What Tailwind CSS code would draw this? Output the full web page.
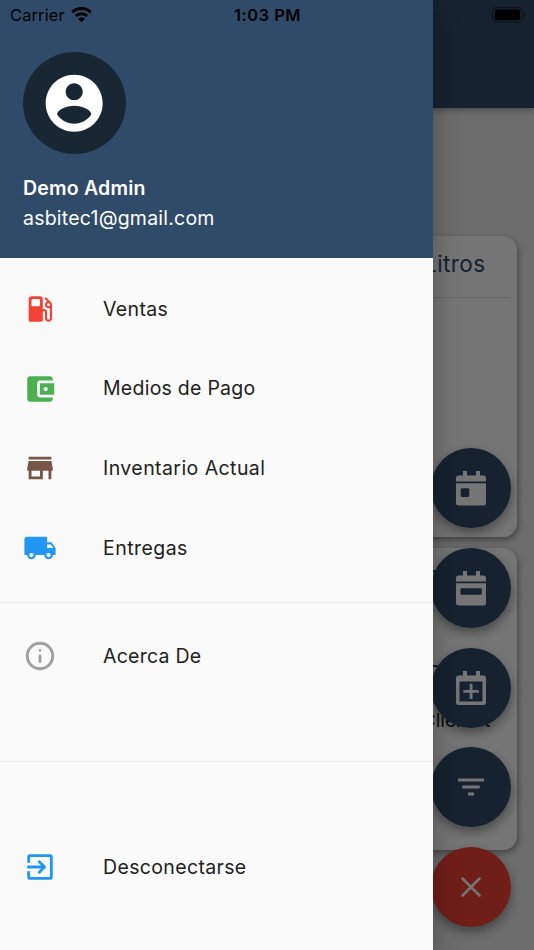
<!DOCTYPE html>
<html lang="es">
<head>
<meta charset="utf-8">
<title>Menú</title>
<script src="https://cdn.jsdelivr.net/npm/@tailwindcss/browser@4"></script>
</head>
<body class="relative h-[950px] w-[534px] overflow-hidden bg-[#eeeeee] font-['Inter','Liberation_Sans',sans-serif]">

<!-- Dashboard behind the drawer -->
<main class="flex h-full flex-col">
  <header class="relative h-[108px] shrink-0 bg-[#304b69] shadow-[0_3px_6px_rgba(0,0,0,0.3)]"></header>
  <div class="mt-[127.500px] flex flex-col gap-[10.500px] pr-[17.500px] pl-[17px]">
    <section class="h-[301.500px] rounded-[14px] bg-white shadow-[1px_3px_7px_rgba(0,0,0,0.4)]">
      <h2 class="h-[62px] mx-[6px] border-b border-[#e4e4e4] pr-[25px] pt-[11px] text-right text-[22.5px] leading-[34px] tracking-[0.4px] text-[#304b69]">Litros</h2>
    </section>
    <section class="h-[302px] rounded-[14px] bg-white shadow-[1px_3px_7px_rgba(0,0,0,0.4)]">
      <div class="mx-[6px] flex h-[63px] justify-end border-b border-[#e4e4e4] pr-[74px] pt-[9px] text-[22px] leading-[34px] text-[#304b69]">r</div>
      <div class="flex justify-end pr-[75px] pt-[49px] text-[19px] leading-[26px] text-[#212121]">C</div>
      <div class="flex justify-end pr-[26px] pt-[22px] text-[19px] leading-[26px] text-[#212121]">Client. t</div>
    </section>
  </div>
</main>

<!-- Floating action buttons -->
<div class="absolute top-[448.300px] left-[431px] flex flex-col gap-[19.7px]">
  <button class="flex size-[80px] items-center justify-center rounded-full bg-[#304b69] shadow-[0_5px_11px_rgba(0,0,0,0.4)]">
    <svg class="h-[36px] w-[32px]" viewBox="0 0 32 36" fill="white"><path fill-rule="evenodd" d="M1 11.500V8a2.500 2.500 0 0 1 2.500-2.500H8V1h4v4.500h9V1h4v4.500h3.500A2.500 2.500 0 0 1 31 8v3.500ZM1 13.200H31V33a2.500 2.500 0 0 1-2.500 2.500h-25A2.500 2.500 0 0 1 1 33ZM7 18.300a1.300 1.300 0 0 0-1.300 1.300v6a1.300 1.300 0 0 0 1.300 1.300h6a1.300 1.300 0 0 0 1.300-1.300v-6a1.300 1.300 0 0 0-1.300-1.300Z"/></svg>
  </button>
  <button class="flex size-[80px] items-center justify-center rounded-full bg-[#304b69] shadow-[0_5px_11px_rgba(0,0,0,0.4)]">
    <svg class="h-[36px] w-[32px]" viewBox="0 0 32 36" fill="white"><path fill-rule="evenodd" d="M1 11.500V8a2.500 2.500 0 0 1 2.500-2.500H8V1h4v4.500h9V1h4v4.500h3.500A2.500 2.500 0 0 1 31 8v3.500ZM1 13.200H31V33a2.500 2.500 0 0 1-2.500 2.500h-25A2.500 2.500 0 0 1 1 33ZM6.700 18.300a1.200 1.200 0 0 0-1.200 1.200v4a1.200 1.200 0 0 0 1.200 1.200h18.900a1.200 1.200 0 0 0 1.200-1.200v-4a1.200 1.200 0 0 0-1.200-1.200Z"/></svg>
  </button>
  <button class="flex size-[80px] items-center justify-center rounded-full bg-[#304b69] shadow-[0_5px_11px_rgba(0,0,0,0.4)]">
    <svg class="h-[36px] w-[32px]" viewBox="0 0 32 36" fill="white"><path fill-rule="evenodd" d="M3.500 5.500H8V1h4v4.500h9V1h4v4.500h3.500A2.500 2.500 0 0 1 31 8v24.500a2.500 2.500 0 0 1-2.500 2.500h-25A2.500 2.500 0 0 1 1 32.500V8a2.500 2.500 0 0 1 2.500-2.500ZM4.500 11.500V31.500h23V11.500Z"/><path d="M14.700 13.700h2.800v6.300h6.300v2.800h-6.300v6.300h-2.800v-6.300H8.400v-2.800h6.300Z"/></svg>
  </button>
  <button class="flex size-[80px] items-center justify-center rounded-full bg-[#304b69] shadow-[0_5px_11px_rgba(0,0,0,0.4)]">
    <svg class="h-[18px] w-[26px]" viewBox="0 0 26 18" fill="white"><path d="M0 .5h26v3H0ZM4.300 7.500h17.400v3H4.300ZM10 14.500h6v3h-6Z"/></svg>
  </button>
  <button class="flex size-[80px] items-center justify-center rounded-full bg-[#f44336] shadow-[0_5px_11px_rgba(0,0,0,0.4)]">
    <svg class="size-[20px]" viewBox="0 0 20 20" fill="none" stroke="white" stroke-width="2.500" stroke-linecap="round"><path d="M1.500 1.500l17 17M18.500 1.500l-17 17"/></svg>
  </button>
</div>

<!-- Scrim -->
<div class="absolute inset-0 bg-black/54"></div>

<!-- Navigation drawer -->
<aside class="absolute inset-y-0 left-0 flex w-[432.800px] flex-col bg-[#fafafa] shadow-[0_10px_26px_rgba(0,0,0,0.3)]">
  <div class="flex h-[258px] shrink-0 flex-col bg-[#304b69] pl-[23px] pt-[51.500px] text-white">
    <div class="flex size-[102.500px] items-center justify-center rounded-full bg-[#192735]">
      <svg class="size-[68.400px]" viewBox="0 0 24 24" fill="white"><path d="M12 2C6.480 2 2 6.480 2 12s4.480 10 10 10 10-4.480 10-10S17.520 2 12 2zm0 3c1.660 0 3 1.340 3 3s-1.340 3-3 3-3-1.340-3-3 1.340-3 3-3zm0 14.200c-2.500 0-4.710-1.280-6-3.220.03-1.990 4-3.080 6-3.080 1.990 0 5.970 1.090 6 3.080-1.290 1.940-3.500 3.220-6 3.220z"/></svg>
    </div>
    <p class="mt-[19px] text-[19.500px] leading-[30px] font-semibold tracking-[0.200px]">Demo Admin</p>
    <p class="text-[19.500px] leading-[30px] tracking-[0.220px]">asbitec1@gmail.com</p>
  </div>
  <nav class="flex flex-col pt-[11px] text-[19.500px] tracking-[0.350px] text-[#212121]">
    <a class="flex h-[79.750px] items-center gap-[46px] pl-[23px]">
      <svg class="size-[34px]" viewBox="0 0 24 24" fill="#f44336"><path fill-rule="evenodd" d="M19.770 7.230l.01-.01-3.190-3.190a.75.75 0 0 0-1.060 1.060l1.580 1.580c-.94.36-1.610 1.260-1.610 2.330 0 1.380 1.120 2.500 2.500 2.500.36 0 .69-.08 1-.21v7.210c0 .55-.45 1-1 1s-1-.45-1-1V14c0-1.100-.9-2-2-2h-1V5c0-1.100-.9-2-2-2H6c-1.100 0-2 .9-2 2v15c0 .55.45 1 1 1h8c.55 0 1-.45 1-1v-6.500h1.500v5c0 1.380 1.120 2.500 2.500 2.500s2.500-1.120 2.500-2.500V9c0-.69-.28-1.320-.73-1.770zM11.500 10h-5a.5.5 0 0 1-.5-.5V6a1 1 0 0 1 1-1h4a1 1 0 0 1 1 1v3.500a.5.5 0 0 1-.5.5zm6.500 0c-.55 0-1-.45-1-1s.45-1 1-1 1 .45 1 1-.45 1-1 1z"/></svg>
      <span class="pt-[2px]">Ventas</span>
    </a>
    <a class="flex h-[79.750px] items-center gap-[46px] pl-[23px]">
      <svg class="size-[34px]" viewBox="0 0 24 24" fill="#4caf50"><path d="M21 18v1c0 1.100-.9 2-2 2H5c-1.110 0-2-.9-2-2V5c0-1.100.89-2 2-2h14c1.100 0 2 .9 2 2v1h-9c-1.110 0-2 .9-2 2v8c0 1.100.89 2 2 2h9zm-9-2h10V8H12v8zm4-2.500c-.83 0-1.500-.67-1.500-1.500s.67-1.500 1.500-1.500 1.500.67 1.500 1.500-.67 1.500-1.500 1.500z"/></svg>
      <span class="tracking-[0.250px]">Medios de Pago</span>
    </a>
    <a class="flex h-[79.750px] items-center gap-[46px] pl-[23px]">
      <svg class="size-[34px]" viewBox="0 0 24 24" fill="#795548"><path d="M20 4H4v2h16V4zm1 10v-2l-1-5H4l-1 5v2h1v6h10v-6h4v6h2v-6h1zm-9 4H6v-4h6v4z"/></svg>
      <span class="tracking-[0.430px]">Inventario Actual</span>
    </a>
    <a class="flex h-[79.750px] items-center gap-[46px] pl-[23px]">
      <svg class="size-[34px]" viewBox="0 0 24 24" fill="#2196f3"><path d="M20 8h-3V4H3c-1.100 0-2 .9-2 2v11h2c0 1.660 1.340 3 3 3s3-1.340 3-3h6c0 1.660 1.340 3 3 3s3-1.340 3-3h2v-5l-3-4zM6 18.500c-.83 0-1.500-.67-1.500-1.500s.67-1.500 1.500-1.500 1.500.67 1.500 1.500-.67 1.500-1.500 1.500zm13.500-9l1.960 2.500H17V9.500h2.500zm-1.500 9c-.83 0-1.500-.67-1.500-1.500s.67-1.500 1.500-1.500 1.500.67 1.500 1.500-.67 1.500-1.500 1.500z"/></svg>
      <span class="tracking-[0.450px]">Entregas</span>
    </a>
    <div class="mt-[14px] mb-[13.500px] h-px bg-[#e8e8e8]"></div>
    <a class="flex h-[79px] items-center gap-[46px] pl-[23px]">
      <svg class="size-[34px]" viewBox="0 0 24 24" fill="none" stroke="#9e9e9e" stroke-width="2"><circle cx="12" cy="12" r="9"/><path stroke-linecap="round" d="M12 12v4M12 8v.01"/></svg>
      <span class="pt-px tracking-[0.250px]">Acerca De</span>
    </a>
    <div class="mt-[65.500px] mb-[65.500px] h-px bg-[#e8e8e8]"></div>
    <a class="flex h-[79px] items-center gap-[46px] pl-[23px]">
      <svg class="size-[34px]" viewBox="0 0 24 24" fill="none" stroke="#2196f3" stroke-width="2"><path d="M4 9V5a1 1 0 0 1 1-1h14a1 1 0 0 1 1 1v14a1 1 0 0 1-1 1H5a1 1 0 0 1-1-1v-4M3 12h12"/><path stroke-linecap="round" stroke-linejoin="round" d="M11.500 8.300L15.200 12l-3.700 3.700"/></svg>
      <span class="pt-px">Desconectarse</span>
    </a>
  </nav>
</aside>

<!-- Status bar -->
<div class="absolute inset-x-0 top-0 grid h-[30px] grid-cols-3 items-center pr-[8px] pl-[10px] text-[17px] leading-[30px] text-black">
  <div class="flex items-center gap-[6px]">
    <span class="text-[16.500px] tracking-[0.100px]">Carrier</span>
    <svg class="h-[16px] w-[21px]" viewBox="0 0 21 16" fill="none" stroke="black" stroke-width="3"><path d="M1.300 5.300a13.200 13.200 0 0 1 18.400 0M4.800 8.900a8.300 8.300 0 0 1 11.400 0"/><path fill="black" stroke="none" d="M6.900 11.800a5.300 5.300 0 0 1 7.200 0L10.500 15.300Z"/></svg>
  </div>
  <span class="pr-px text-center text-[16.500px] font-semibold tracking-[0.500px]">1:03 PM</span>
  <svg class="h-[17px] w-[34px] justify-self-end" viewBox="0 0 34 17"><rect x=".8" y=".7" width="29.500" height="14.500" rx="4" fill="none" stroke="black" stroke-opacity=".4" stroke-width="1.300"/><rect x="3" y="2.600" width="25" height="10.600" rx="2" fill="black"/><path d="M32 5.500a2.600 2.600 0 0 1 0 5Z" fill="black" fill-opacity=".4"/></svg>
</div>
</body>
</html>
